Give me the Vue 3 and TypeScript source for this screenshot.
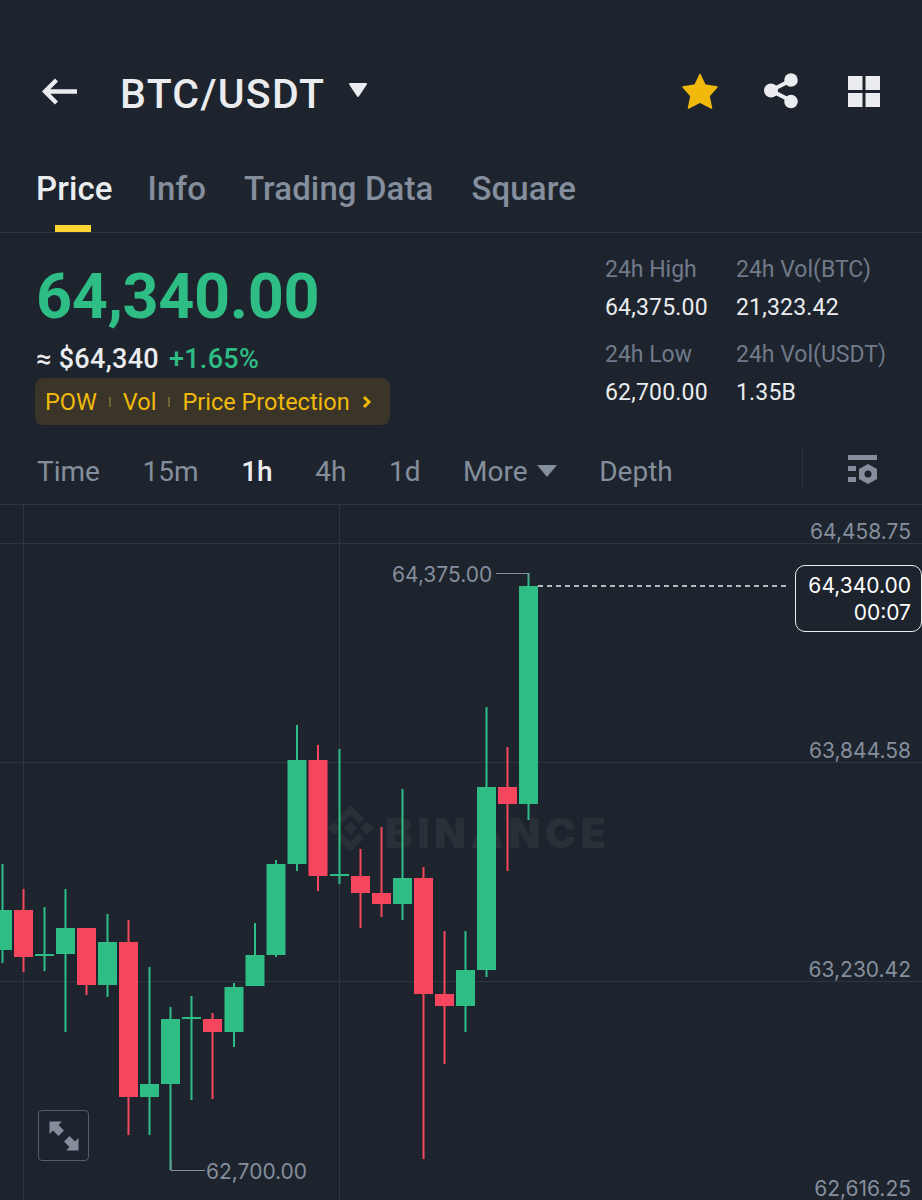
<script setup lang="ts">
interface Candle { x: number; up: boolean; hi: number; top: number; bot: number; lo: number }
const raw: [number, 0 | 1, number, number, number, number][] = [
  [2.5, 1, 864, 910, 950, 963],
  [23.5, 0, 889, 910, 957, 972],
  [44.5, 1, 907, 954, 956, 971],
  [65.5, 1, 889, 928, 954, 1032],
  [86.5, 0, 928, 928, 985, 995],
  [107.5, 1, 914, 942, 985, 997],
  [128.5, 0, 920, 942, 1097, 1135],
  [149.5, 1, 967, 1084, 1097, 1135],
  [170.5, 1, 1007, 1019, 1084, 1170],
  [191.5, 1, 996, 1017, 1019, 1100],
  [212.5, 0, 1013, 1019, 1032, 1099],
  [234, 1, 983, 987, 1032, 1047],
  [255, 1, 923, 955, 986, 986],
  [276, 1, 860, 864, 955, 957],
  [297, 1, 725, 760, 864, 871],
  [318, 0, 745, 760, 876, 891],
  [339.5, 1, 749, 874, 876, 884],
  [360.5, 0, 849, 876, 893, 928],
  [381.5, 0, 827, 893, 904, 917],
  [402.5, 1, 789, 878, 904, 920],
  [423.5, 0, 867, 878, 994, 1159],
  [444.5, 0, 931, 994, 1006, 1064],
  [465.5, 1, 931, 970, 1006, 1032],
  [486.5, 1, 707, 787, 970, 977],
  [507.5, 0, 747, 787, 804, 871],
  [528.5, 1, 573, 586, 804, 820],
]
const OFFSET = 505
const candles: Candle[] = raw.map(([x, u, hi, top, bot, lo]) => ({
  x, up: u === 1, hi: hi - OFFSET, top: top - OFFSET, bot: bot - OFFSET, lo: lo - OFFSET,
}))
const tabs = ['Price', 'Info', 'Trading Data', 'Square']
const stats = [
  { label: '24h High', value: '64,375.00' },
  { label: '24h Vol(BTC)', value: '21,323.42' },
  { label: '24h Low', value: '62,700.00' },
  { label: '24h Vol(USDT)', value: '1.35B' },
]
const scale = [
  { t: '64,458.75', y: 38 },
  { t: '63,844.58', y: 257 },
  { t: '63,230.42', y: 476 },
  { t: '62,616.25', y: 695 },
]
</script>

<template>
  <div class="page">
    <header class="head">
      <svg class="back" width="37" height="27" viewBox="0 0 37 27">
        <path d="M15.5 2 4 13.5 15.5 25M4 13.5h32" fill="none" stroke="#eaecef" stroke-width="4.4" />
      </svg>
      <h1 class="pair">BTC/USDT</h1>
      <svg class="caret" width="20" height="16" viewBox="0 0 20 16"><path d="M2 2h16l-8 12z" fill="#eaecef" stroke="#eaecef" stroke-width="2" stroke-linejoin="round" /></svg>
      <div class="head-icons">
        <svg class="ic-star" width="36" height="36" viewBox="0 0 36 36">
          <path d="M18 1.500 23 12l12 2-8 9 2.500 12L18 29 6.500 35 9 23l-8-9 12-2z" fill="#f0b90b" stroke="#f0b90b" stroke-width="1.500" stroke-linejoin="round" />
        </svg>
        <svg class="ic-share" width="34" height="36" viewBox="0 0 34 36">
          <path d="M27.500 7 7 17.500 27.500 28" fill="none" stroke="#eaecef" stroke-width="4" />
          <circle cx="27" cy="7" r="6.800" fill="#eaecef" /><circle cx="7" cy="17.500" r="7" fill="#eaecef" /><circle cx="27" cy="28.500" r="6.800" fill="#eaecef" />
        </svg>
        <svg class="ic-grid" width="32" height="31" viewBox="0 0 32 31">
          <path d="M0 0h14.500v14H0zM17.500 0H32v14H17.500zM0 17h14.500v14H0zM17.500 17H32v14H17.500z" fill="#eaecef" />
        </svg>
      </div>
    </header>

    <nav class="tabs">
      <span v-for="(t, i) in tabs" :key="t" class="tab" :class="{ on: i === 0 }">{{ t }}</span>
    </nav>

    <section class="stats">
      <div class="left">
        <div class="price">64,340.00</div>
        <div class="sub"><span class="usd">≈ $64,340</span><span class="pct">+1.65%</span></div>
        <div class="tags">
          <span>POW</span><i class="sep"></i><span>Vol</span><i class="sep"></i><span>Price Protection</span>
          <svg width="10" height="14" viewBox="0 0 10 14"><path d="M2 2l5 5-5 5" fill="none" stroke="#f0b90b" stroke-width="3" /></svg>
        </div>
      </div>
      <div class="grid">
        <div v-for="s in stats" :key="s.label" class="cell">
          <div class="lab">{{ s.label }}</div>
          <div class="val">{{ s.value }}</div>
        </div>
      </div>
    </section>

    <div class="intervals">
      <span class="iv">Time</span>
      <span class="iv">15m</span>
      <span class="iv iv-on">1h</span>
      <span class="iv">4h</span>
      <span class="iv">1d</span>
      <span class="iv iv-more">More
        <svg width="20" height="14" viewBox="0 0 20 14"><path d="M0 1h20L10 13z" fill="#848e9c" /></svg>
      </span>
      <span class="iv">Depth</span>
      <div class="tools">
        <svg width="30" height="30" viewBox="0 0 30 30">
          <path d="M0 0h29v5H0zM0 11h8v5H0zM0 22h8v5H0z" fill="#848e9c" />
          <path d="M20 9l9 5v10l-9 5-9-5V14z" fill="#848e9c" />
          <circle cx="20" cy="19" r="3.500" fill="#1e242d" />
        </svg>
      </div>
    </div>

    <div class="chart">
      <svg class="plot" width="922" height="695" viewBox="0 0 922 695">
        <g stroke="#2f3640" stroke-width="1">
          <path d="M0 38.500h922M0 257.500h922M0 476.500h922" />
          <path d="M23.500 0v695M339.500 0v695" />
        </g>
        <g fill="#2a3038">
          <path transform="translate(350.500,323.500)" d="M0-23.500 13.500-10l-5 5L0-13.500-8.500-5l-5-5zM0 23.500 13.500 10l-5-5L0 13.500-8.500 5l-5 5zM0-6.500 6.500 0 0 6.500-6.500 0zM-16.500-6.500-10 0l-6.500 6.500L-23 0zM16.500-6.500 23 0l-6.500 6.500L10 0z" />
          <text x="385" y="343" class="wm">BINANCE</text>
        </g>
        <g v-for="c in candles" :key="c.x">
          <rect :x="c.x - 1" :y="c.hi" width="2" :height="c.lo - c.hi" :fill="c.up ? '#2ebd85' : '#f6465d'" />
          <rect :x="c.x - 9.5" :y="c.top" width="19" :height="c.bot - c.top" :fill="c.up ? '#2ebd85' : '#f6465d'" />
        </g>
        <path d="M496 68.500h32.500v6M171 655v10.500h34" fill="none" stroke="#848e9c" stroke-width="1" />
        <path d="M538 81h252" fill="none" stroke="#eaecef" stroke-width="1.500" stroke-dasharray="5 4" />
        <text x="392" y="77" class="ax">64,375.00</text>
        <text x="206" y="674" class="ax">62,700.00</text>
      </svg>
      <span v-for="s in scale" :key="s.t" class="tick" :style="{ top: s.y - 24 + 'px' }">{{ s.t }}</span>
      <div class="now"><span>64,340.00</span><span>00:07</span></div>
      <button class="expand" type="button" aria-label="Expand">
        <svg width="32" height="32" viewBox="0 0 32 32">
          <path d="M1.500 1.500H14L10.500 5l5.500 5.500-5.500 5.500L5 10.500 1.500 14zM30.500 30.500H18l3.500-3.500-5.500-5.500 5.500-5.500 5.500 5.500 3.500-3.500z" fill="#848e9c" />
        </svg>
      </button>
    </div>
  </div>
</template>

<style>
html, body { margin: 0; background: #1e242d; }
</style>
<style scoped>
.page { width: 922px; height: 1200px; overflow: hidden; background: #1e242d; font-family: Roboto, "Noto Sans", sans-serif; color: #eaecef; }
.head { height: 150px; padding: 32px 42px 0 41px; box-sizing: border-box; display: flex; align-items: center; }
.back { margin-right: 42px; flex: none; }
.pair { margin: 6px 0 0; font-size: 41px; font-weight: 500; letter-spacing: 1.3px; line-height: 48px; }
.caret { margin: -2px 0 0 23px; }
.head-icons { margin-left: auto; display: flex; align-items: center; }
.ic-share { margin-left: 46px; }
.ic-grid { margin-left: 50px; }
.tabs { height: 83px; box-sizing: border-box; padding: 20px 0 0 36px; display: flex; gap: 38px; border-bottom: 1px solid #2f3640; }
.tab { position: relative; font-size: 33px; font-weight: 500; color: #848e9c; line-height: 38px; letter-spacing: 0.1px; }
.tab.on { color: #eaecef; margin-right: -3px; }
.tab.on::after { content: ""; position: absolute; left: 19px; width: 36px; bottom: 0; height: 7px; background: #fcd535; }
.stats { display: flex; justify-content: space-between; height: 211px; padding: 30px 36px 0 36px; box-sizing: border-box; }
.price { font-size: 63px; font-weight: 700; line-height: 68px; color: #2ebd85; letter-spacing: -0.4px; }
.sub { margin-top: 13px; display: flex; gap: 10px; font-size: 27px; font-weight: 500; line-height: 30px; letter-spacing: 0.3px; }
.pct { color: #2ebd85; }
.tags { margin: 4px 0 0 -1px; display: inline-flex; align-items: center; height: 47px; padding: 0 18px 0 10px; box-sizing: border-box; border-radius: 8px; background: #3a3528; color: #f0b90b; font-size: 23.5px; gap: 12px; }
.sep { width: 2px; height: 10px; background: #6f6433; }
.grid { display: grid; grid-template-columns: 131px auto; row-gap: 18px; align-content: start; margin-top: -8px; }
.lab { font-size: 23px; color: #707a8a; line-height: 30px; }
.val { font-size: 23px; margin-top: 9px; line-height: 28px; letter-spacing: 0.2px; color: #eaecef; }
.intervals { display: flex; align-items: center; height: 54px; padding: 0 0 6px 37px; gap: 42.6px; border-bottom: 1px solid #2f3640; font-size: 28px; color: #848e9c; }
.iv-on { color: #eaecef; font-weight: 500; }
.iv-more { display: inline-flex; align-items: center; gap: 9px; }
.tools { margin: -6px 0 0 auto; height: 38px; width: 120px; border-left: 1px solid #2f3640; display: flex; align-items: center; padding-left: 45px; box-sizing: border-box; }
.tools svg { margin-top: 4px; }
.chart { position: relative; height: 695px; }
.plot { display: block; }
.ax { font-family: Inter, Roboto, sans-serif; font-size: 21px; fill: #848e9c; }
.wm { font-family: Inter, Roboto, sans-serif; font-size: 41px; font-weight: 900; fill: #2a3038; letter-spacing: 5px; }
.tick { position: absolute; right: 11px; font-family: Inter, Roboto, sans-serif; font-size: 21px; line-height: 26px; color: #848e9c; }
.now { position: absolute; left: 795px; top: 60px; width: 127px; height: 67px; box-sizing: border-box; border: 1.5px solid #eaecef; border-radius: 10px; background: #1e242d; display: flex; flex-direction: column; align-items: flex-end; justify-content: center; padding-right: 10px; font-family: Inter, Roboto, sans-serif; font-size: 21px; line-height: 27px; color: #fff; }
.expand { position: absolute; left: 38px; top: 605px; width: 51px; height: 51px; padding: 0; border: 1.5px solid #565c68; border-radius: 4px; background: transparent; display: flex; align-items: center; justify-content: center; }
</style>
